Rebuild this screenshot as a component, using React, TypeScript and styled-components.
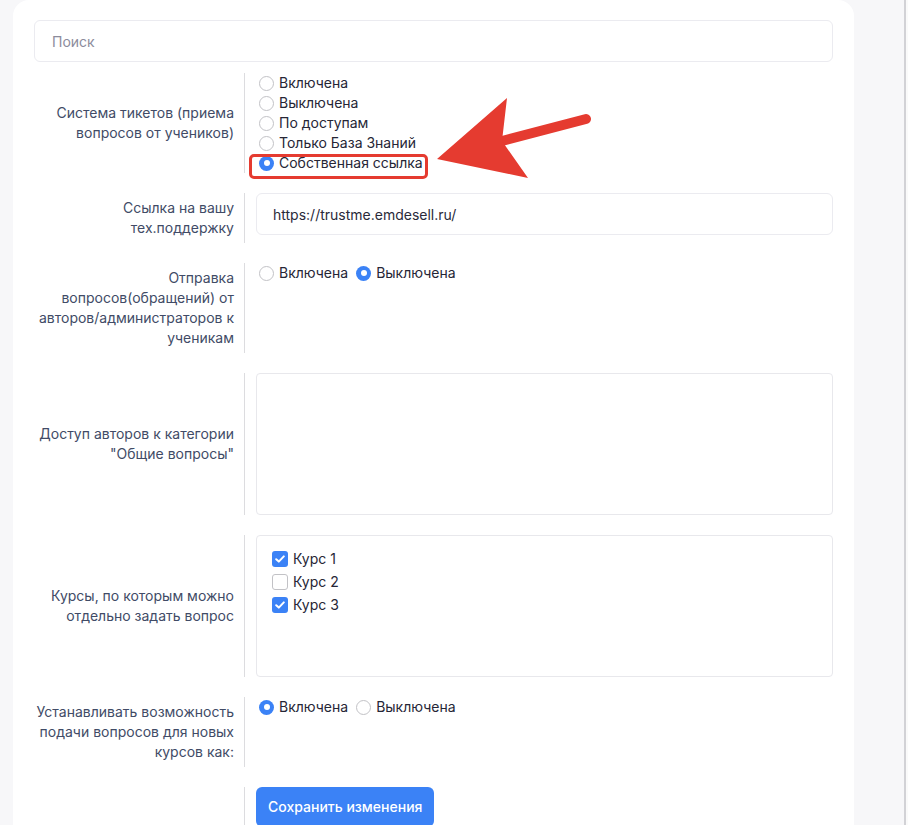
import React from "react";
import styled, { createGlobalStyle } from "styled-components";

const GlobalStyle = createGlobalStyle`
  html, body { margin: 0; padding: 0; }
  body {
    background: #f7f7f9;
    font-family: Inter, "Noto Sans", Arial, sans-serif;
    font-size: 14px;
    line-height: 20px;
    color: #2a2a3a;
  }
  * { box-sizing: border-box; }
`;

const Page = styled.div`
  display: flex;
  width: 908px;
  min-height: 825px;
  padding-left: 13px;
  background: #f7f7f9;
`;

const Card = styled.div`
  position: relative;
  width: 841px;
  background: #ffffff;
  border-radius: 16px 16px 0 0;
  padding: 20px 21px 0 21px;
`;

const Scrollbar = styled.div`
  margin-left: auto;
  width: 4px;
  border-left: 2px solid #d2d2d6;
  background: #fafafa;
`;

const SearchInput = styled.input`
  display: block;
  width: 100%;
  height: 42px;
  margin: 0 0 11px 0;
  padding: 0 17px;
  border: 1px solid #ebebf0;
  border-radius: 6px;
  font: inherit;
  color: #2a2a3a;
  outline: none;
  &::placeholder { color: #8c8c9c; }
`;

const Row = styled.div`
  display: grid;
  grid-template-columns: 210px 1fr;
  margin-bottom: 20px;
`;

const Label = styled.div`
  display: flex;
  align-items: center;
  justify-content: flex-end;
  text-align: right;
  padding: 5px 10px 5px 0;
  color: #414b66;
`;

const Control = styled.div`
  border-left: 1px solid #dcdcdf;
  padding-left: 11px;
`;

const RadioList = styled.div<{ $inline?: boolean }>`
  display: flex;
  flex-direction: ${(p) => (p.$inline ? "row" : "column")};
  align-items: flex-start;
`;

const RadioItem = styled.label<{ $inline?: boolean }>`
  position: relative;
  display: inline-flex;
  align-items: center;
  height: 20px;
  margin-left: 3px;
  margin-right: ${(p) => (p.$inline ? "5px" : "0")};
  color: #262636;
  white-space: nowrap;
`;

const RadioDot = styled.span<{ $checked?: boolean }>`
  width: 15px;
  height: 15px;
  margin-right: 5px;
  border-radius: 50%;
  flex-shrink: 0;
  background: ${(p) => (p.$checked ? "#3b82f6" : "#ffffff")};
  border: ${(p) => (p.$checked ? "none" : "1px solid #c2c2c6")};
  display: flex;
  align-items: center;
  justify-content: center;
  &::after {
    content: "";
    display: ${(p) => (p.$checked ? "block" : "none")};
    width: 6px;
    height: 6px;
    border-radius: 50%;
    background: #ffffff;
  }
`;

const Highlight = styled.span`
  position: absolute;
  left: -10px;
  right: -5px;
  top: 1px;
  bottom: -6px;
  border: 3px solid #e53b30;
  border-radius: 5px;
  pointer-events: none;
`;

const TextInput = styled.input`
  display: block;
  width: 100%;
  height: 42px;
  padding: 0 16px;
  border: 1px solid #ebebf0;
  border-radius: 6px;
  font: inherit;
  color: #2a2a3a;
  outline: none;
`;

const TextArea = styled.textarea`
  display: block;
  width: 100%;
  height: 142px;
  border: 1px solid #e8e8ec;
  border-radius: 4px;
  resize: none;
  font: inherit;
  outline: none;
`;

const CheckBox = styled.div`
  height: 142px;
  border: 1px solid #e8e8ec;
  border-radius: 4px;
  padding: 13px 15px;
  display: flex;
  flex-direction: column;
  gap: 3px;
`;

const CheckItem = styled.label`
  display: flex;
  align-items: center;
  height: 20px;
  color: #262636;
`;

const CheckMark = styled.span<{ $checked?: boolean }>`
  width: 16px;
  height: 16px;
  margin-right: 5px;
  border-radius: 3px;
  display: flex;
  align-items: center;
  justify-content: center;
  background: ${(p) => (p.$checked ? "#3b82f6" : "#ffffff")};
  border: ${(p) => (p.$checked ? "none" : "1px solid #c2c2c6")};
`;

const SaveButton = styled.button`
  height: 40px;
  padding: 0 12px;
  border: none;
  border-radius: 6px;
  background: #3b82f6;
  color: #ffffff;
  font: inherit;
  font-weight: 500;
  cursor: pointer;
`;

const Arrow = styled.svg`
  position: absolute;
  left: 417px;
  top: 90px;
  overflow: visible;
`;

function Radio({ label, checked, inline, highlight }: { label: string; checked?: boolean; inline?: boolean; highlight?: boolean }) {
  return (
    <RadioItem $inline={inline}>
      <RadioDot $checked={checked} />
      {label}
      {highlight && <Highlight />}
    </RadioItem>
  );
}

function Check({ label, checked }: { label: string; checked?: boolean }) {
  return (
    <CheckItem>
      <CheckMark $checked={checked}>
        {checked && (
          <svg width="10" height="8" viewBox="0 0 10 8">
            <path d="M1.2 4.2 L3.8 6.6 L8.8 1.4" fill="none" stroke="#fff" strokeWidth="2" strokeLinecap="round" strokeLinejoin="round" />
          </svg>
        )}
      </CheckMark>
      {label}
    </CheckItem>
  );
}

export default function App() {
  return (
    <>
      <GlobalStyle />
      <Page>
        <Card>
          <SearchInput placeholder="Поиск" />

          <Row>
            <Label>Система тикетов (приема вопросов от учеников)</Label>
            <Control>
              <RadioList>
                <Radio label="Включена" />
                <Radio label="Выключена" />
                <Radio label="По доступам" />
                <Radio label="Только База Знаний" />
                <Radio label="Собственная ссылка" checked highlight />
              </RadioList>
            </Control>
          </Row>

          <Row>
            <Label>Ссылка на вашу тех.поддержку</Label>
            <Control>
              <TextInput defaultValue="https://trustme.emdesell.ru/" />
            </Control>
          </Row>

          <Row>
            <Label>Отправка вопросов(обращений) от авторов/администраторов к ученикам</Label>
            <Control>
              <RadioList $inline>
                <Radio label="Включена" inline />
                <Radio label="Выключена" inline checked />
              </RadioList>
            </Control>
          </Row>

          <Row>
            <Label>Доступ авторов к категории "Общие вопросы"</Label>
            <Control>
              <TextArea />
            </Control>
          </Row>

          <Row>
            <Label>Курсы, по которым можно отдельно задать вопрос</Label>
            <Control>
              <CheckBox>
                <Check label="Курс 1" checked />
                <Check label="Курс 2" />
                <Check label="Курс 3" checked />
              </CheckBox>
            </Control>
          </Row>

          <Row>
            <Label>Устанавливать возможность подачи вопросов для новых курсов как:</Label>
            <Control>
              <RadioList $inline>
                <Radio label="Включена" inline checked />
                <Radio label="Выключена" inline />
              </RadioList>
            </Control>
          </Row>

          <Row>
            <Label />
            <Control>
              <SaveButton>Сохранить изменения</SaveButton>
            </Control>
          </Row>

          <Arrow width="170" height="100" viewBox="0 0 170 100">
            <line x1="72" y1="51" x2="156" y2="29" stroke="#e53b30" strokeWidth="10" strokeLinecap="round" />
            <polygon points="7,69 77,8 72,51 98,88" fill="#e53b30" />
          </Arrow>
        </Card>
        <Scrollbar />
      </Page>
    </>
  );
}
